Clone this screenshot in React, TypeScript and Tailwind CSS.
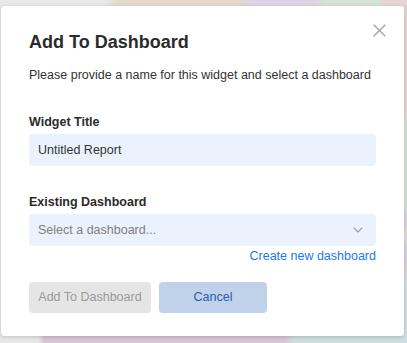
import React from "react";

export default function App() {
  return (
    <div
      className="w-[407px] h-[343px] overflow-hidden flex flex-col bg-[#e8e8e8]"
      style={{ fontFamily: '"Liberation Sans", Arial, Helvetica, sans-serif' }}
    >
      <div className="h-[6px] shrink-0 bg-[linear-gradient(to_right,#e8e8e8_0,#e8e8e8_105px,#e5d9cc_118px,#e5d9cc_238px,#dcd5e5_250px,#dcd5e5_316px,#d4e2d7_326px,#d4e2d7_378px,#e7d5d5_385px)]" />
      <div className="flex h-[330px] shrink-0">
        <div className="w-px shrink-0 bg-[#e8e8e8]" />
        <div className="relative z-10 w-[403px] shrink-0 bg-white rounded-[4px] shadow-[0_1px_4px_rgba(0,0,0,0.18)] px-[28px] pt-[25px] flex flex-col">
          <button className="absolute right-[18px] top-[18px] w-[13px] h-[13px] flex items-center justify-center">
            <svg width="13" height="13" viewBox="0 0 13 13">
              <path d="M0.7 0.7 L12.3 12.3 M12.3 0.7 L0.7 12.3" stroke="#a8a8a8" strokeWidth="1.5" />
            </svg>
          </button>
          <h1 className="text-[18px] leading-[22px] font-bold text-[#2b2b2b]">Add To Dashboard</h1>
          <p className="mt-[14px] text-[12.5px] leading-[16px] text-[#333]">
            Please provide a name for this widget and select a dashboard
          </p>
          <label className="mt-[31px] text-[12.5px] leading-[16px] font-bold text-[#2b2b2b]">Widget Title</label>
          <div className="mt-[4px] h-[32px] rounded-[4px] bg-[#eaf3fd] flex items-center px-[9px] text-[12.5px] text-[#333]">
            Untitled Report
          </div>
          <label className="mt-[28px] text-[12.5px] leading-[16px] font-bold text-[#2b2b2b]">Existing Dashboard</label>
          <div className="mt-[4px] h-[32px] rounded-[4px] bg-[#eaf3fd] flex items-center justify-between pl-[9px] pr-[13px] text-[12.5px] text-[#808080]">
            <span>Select a dashboard...</span>
            <svg width="10" height="6" viewBox="0 0 10 6">
              <path d="M0.7 0.7 L5 5 L9.3 0.7" fill="none" stroke="#9a9a9a" strokeWidth="1.2" />
            </svg>
          </div>
          <div className="flex justify-end mt-[2px]">
            <span className="text-[12.5px] leading-[16px] text-[#1d78f0]">Create new dashboard</span>
          </div>
          <div className="flex gap-[8px] mt-[18px]">
            <button className="h-[31px] w-[122px] rounded-[4px] bg-[#e5e5e5] text-[12.5px] text-[#9a9a9a]">
              Add To Dashboard
            </button>
            <button className="h-[31px] w-[108px] rounded-[4px] bg-[#c0d1ea] text-[12.5px] text-[#2a5db0]">
              Cancel
            </button>
          </div>
        </div>
        <div className="flex-1 bg-[linear-gradient(to_bottom,#e7d5d5_0,#e7d5d5_104px,#d4e2d7_119px,#d4e2d7_199px,#d8d1e2_214px,#e4dcd2_229px,#d5d2e3_244px,#dcd0dc_259px,#cfdfe2_279px)]" />
      </div>
      <div className="flex-1 bg-[linear-gradient(to_right,#e8e8e8_0,#e8e8e8_38px,#d8c6d6_44px,#d8c6d6_283px,#cfdee0_295px)]" />
    </div>
  );
}
